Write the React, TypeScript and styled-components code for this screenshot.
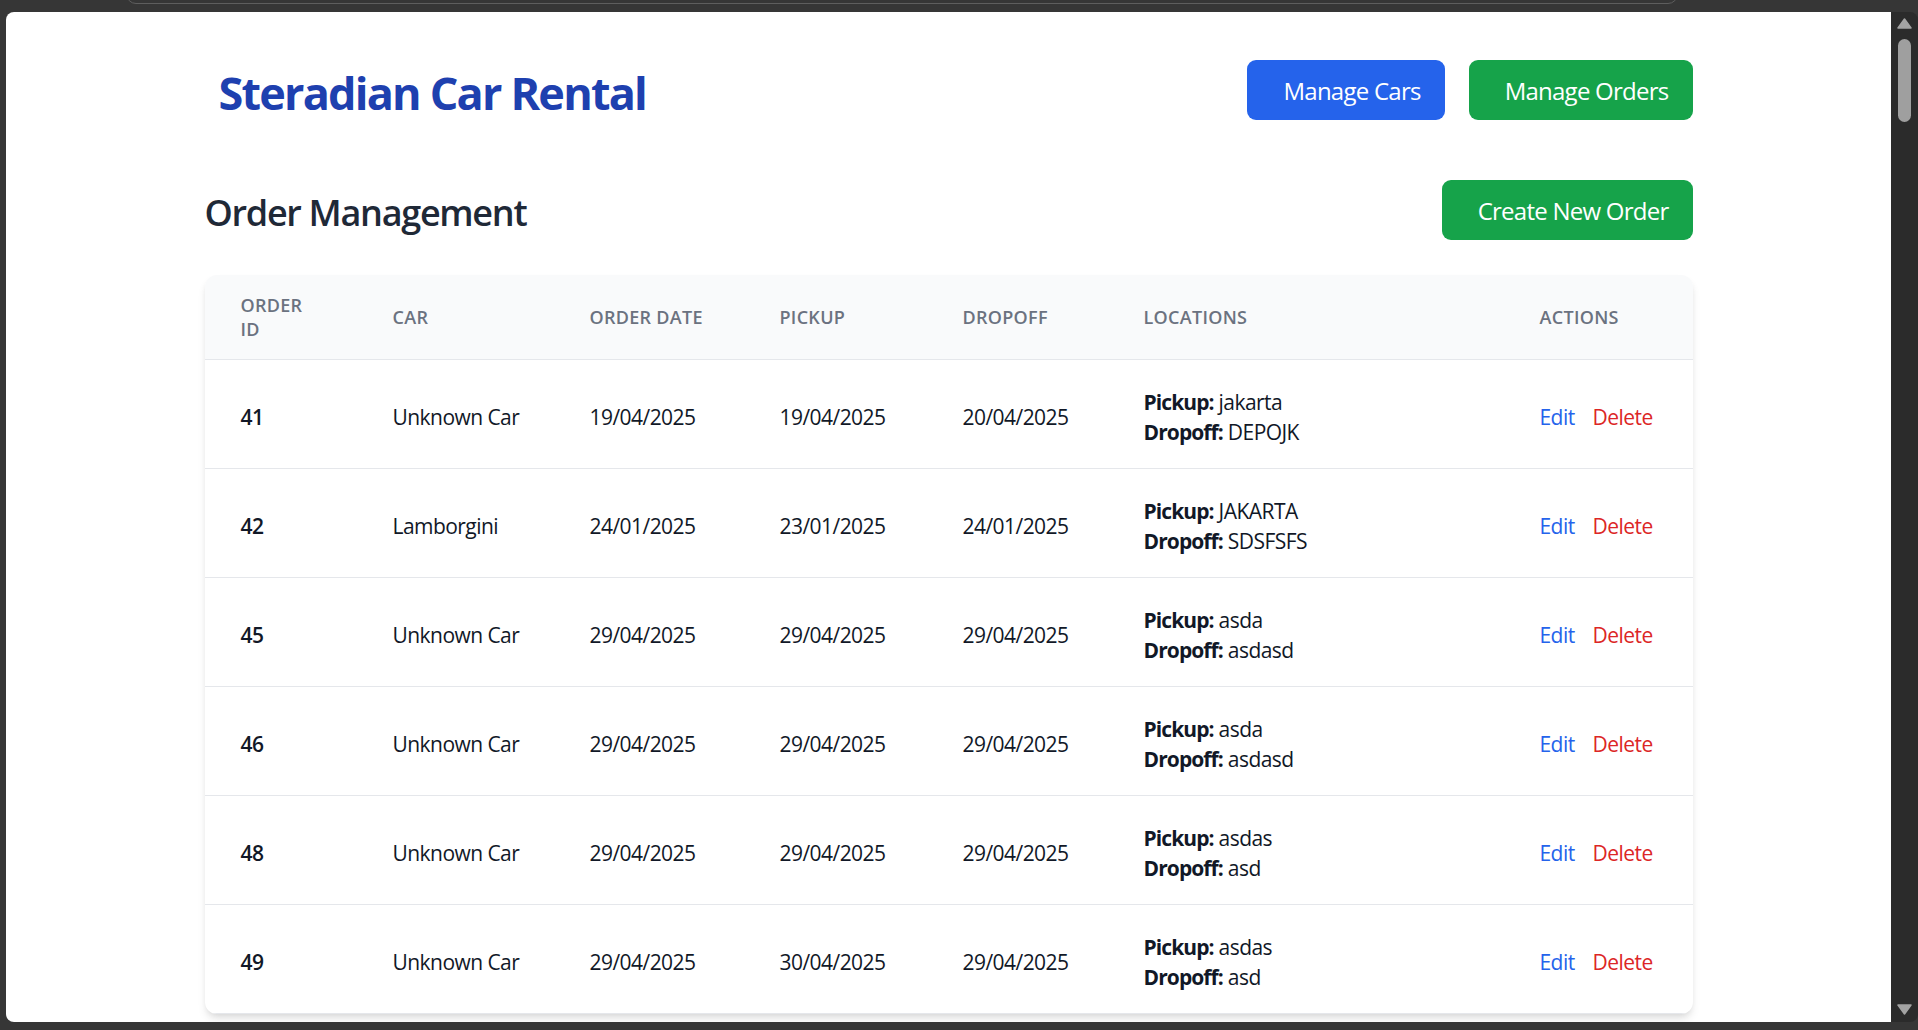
import React from "react";
import styled, { createGlobalStyle } from "styled-components";

const GlobalStyle = createGlobalStyle`
  html, body {
    margin: 0;
    padding: 0;
    background: #363636;
    overflow: hidden;
  }
  * { box-sizing: border-box; }
  body {
    font-family: "Open Sans", "Noto Sans", "Liberation Sans", sans-serif;
  }
`;

const Frame = styled.div`
  width: 1918px;
  height: 1030px;
  display: flex;
  flex-direction: column;
  background: #363636;
  overflow: hidden;
`;

const TopBar = styled.div`
  height: 12px;
  overflow: hidden;
  padding-left: 126px;
  flex-shrink: 0;
`;

const AddressOutline = styled.div`
  width: 1552px;
  height: 22px;
  margin-top: -18px;
  border: 1px solid #5e5e5e;
  border-radius: 10px;
`;

const Middle = styled.div`
  display: flex;
  height: 1010px;
  flex-shrink: 0;
`;

const LeftStrip = styled.div`
  width: 6px;
  flex-shrink: 0;
`;

const Page = styled.div`
  width: 1885px;
  height: 1010px;
  background: #ffffff;
  border-radius: 8px 0 0 8px;
  overflow: hidden;
  flex-shrink: 0;
`;

const ScrollTrack = styled.div`
  width: 27px;
  background: #2b2b2b;
  border-radius: 0 8px 8px 0;
  display: flex;
  flex-direction: column;
  align-items: center;
  padding: 6px 0 7px 0;
  flex-shrink: 0;
`;

const Thumb = styled.div`
  width: 13px;
  height: 83px;
  margin-top: 10px;
  border-radius: 7px;
  background: #9f9f9f;
`;

const TrackSpacer = styled.div`
  flex: 1;
`;

const Container = styled.div`
  max-width: 1536px;
  margin: 0 auto;
  padding: 0 24px;
`;

const Header = styled.header`
  display: flex;
  justify-content: space-between;
  align-items: center;
  padding: 48px 0 0 14px;
`;

const Brand = styled.h1`
  margin: 0;
  padding-top: 6px;
  font-size: 45px;
  line-height: 54px;
  font-weight: 700;
  color: #1e40af;
  letter-spacing: -1.8px;
`;

const Nav = styled.nav`
  display: flex;
  gap: 24px;
`;

const Button = styled.button<{ $tone: "blue" | "green" }>`
  height: 60px;
  padding: 2px 24px 0 36px;
  border: none;
  border-radius: 9px;
  font-family: inherit;
  font-size: 24px;
  line-height: 36px;
  font-weight: 400;
  letter-spacing: -0.75px;
  color: #ffffff;
  background: ${(p) => (p.$tone === "blue" ? "#2563eb" : "#16a34a")};
  cursor: pointer;
`;

const SectionBar = styled.div`
  display: flex;
  justify-content: space-between;
  align-items: center;
  margin-top: 60px;
`;

const SectionTitle = styled.h2`
  margin: 0;
  padding-top: 5px;
  font-size: 36px;
  line-height: 48px;
  font-weight: 600;
  color: #1f2937;
  letter-spacing: -1.3px;
`;

const TableCard = styled.div`
  margin-top: 35px;
  background: #ffffff;
  border-radius: 12px;
  overflow: hidden;
  box-shadow: 0 6px 9px -1.5px rgba(0, 0, 0, 0.1), 0 3px 6px -3px rgba(0, 0, 0, 0.1);
`;

const Table = styled.table`
  width: 100%;
  border-collapse: collapse;
  table-layout: fixed;
`;

const HeadRow = styled.tr`
  background: #f9fafb;
  border-bottom: 1px solid #e5e7eb;
`;

const Th = styled.th`
  padding: 18px 36px;
  text-align: left;
  font-size: 18px;
  line-height: 24px;
  font-weight: 600;
  letter-spacing: 0.3px;
  color: #6b7280;
  text-transform: uppercase;
  vertical-align: middle;
`;

const BodyRow = styled.tr`
  border-bottom: 1px solid #e5e7eb;
`;

const Td = styled.td<{ $strong?: boolean }>`
  padding: 27px 36px 21px;
  font-size: 21px;
  line-height: 30px;
  color: #111827;
  font-weight: ${(p) => (p.$strong ? 600 : 400)};
  white-space: nowrap;
  vertical-align: middle;
  letter-spacing: -0.55px;
`;

const LocLine = styled.div`
  white-space: nowrap;
`;

const Label = styled.span`
  font-weight: 700;
  letter-spacing: -0.9px;
`;

const ActionLink = styled.a<{ $tone: "blue" | "red" }>`
  color: ${(p) => (p.$tone === "blue" ? "#2563eb" : "#dc2626")};
  text-decoration: none;
  margin-right: ${(p) => (p.$tone === "blue" ? "18px" : "0")};
  cursor: pointer;
`;

const cols = [152, 197, 190, 183, 181, 396, 189];

type Order = {
  id: number;
  car: string;
  date: string;
  pickup: string;
  dropoff: string;
  from: string;
  to: string;
};

const orders: Order[] = [
  { id: 41, car: "Unknown Car", date: "19/04/2025", pickup: "19/04/2025", dropoff: "20/04/2025", from: "jakarta", to: "DEPOJK" },
  { id: 42, car: "Lamborgini", date: "24/01/2025", pickup: "23/01/2025", dropoff: "24/01/2025", from: "JAKARTA", to: "SDSFSFS" },
  { id: 45, car: "Unknown Car", date: "29/04/2025", pickup: "29/04/2025", dropoff: "29/04/2025", from: "asda", to: "asdasd" },
  { id: 46, car: "Unknown Car", date: "29/04/2025", pickup: "29/04/2025", dropoff: "29/04/2025", from: "asda", to: "asdasd" },
  { id: 48, car: "Unknown Car", date: "29/04/2025", pickup: "29/04/2025", dropoff: "29/04/2025", from: "asdas", to: "asd" },
  { id: 49, car: "Unknown Car", date: "29/04/2025", pickup: "30/04/2025", dropoff: "29/04/2025", from: "asdas", to: "asd" },
];

const UpArrow = () => (
  <svg width="15" height="11" viewBox="0 0 15 11">
    <path d="M7.5 1 L14 10 L1 10 Z" fill="#a3a3a3" stroke="#a3a3a3" strokeWidth="1.5" strokeLinejoin="round" />
  </svg>
);

const DownArrow = () => (
  <svg width="15" height="11" viewBox="0 0 15 11">
    <path d="M1 1 L14 1 L7.5 10 Z" fill="#a3a3a3" stroke="#a3a3a3" strokeWidth="1.5" strokeLinejoin="round" />
  </svg>
);

export default function App() {
  return (
    <>
      <GlobalStyle />
      <Frame>
        <TopBar>
          <AddressOutline />
        </TopBar>
        <Middle>
          <LeftStrip />
          <Page>
            <Container>
              <Header>
                <Brand>Steradian Car Rental</Brand>
                <Nav>
                  <Button $tone="blue">Manage Cars</Button>
                  <Button $tone="green">Manage Orders</Button>
                </Nav>
              </Header>
              <SectionBar>
                <SectionTitle>Order Management</SectionTitle>
                <Button $tone="green">Create New Order</Button>
              </SectionBar>
              <TableCard>
                <Table>
                  <colgroup>
                    {cols.map((w, i) => (
                      <col key={i} style={{ width: w }} />
                    ))}
                  </colgroup>
                  <thead>
                    <HeadRow>
                      <Th>Order ID</Th>
                      <Th>Car</Th>
                      <Th>Order Date</Th>
                      <Th>Pickup</Th>
                      <Th>Dropoff</Th>
                      <Th>Locations</Th>
                      <Th>Actions</Th>
                    </HeadRow>
                  </thead>
                  <tbody>
                    {orders.map((o) => (
                      <BodyRow key={o.id}>
                        <Td $strong>{o.id}</Td>
                        <Td>{o.car}</Td>
                        <Td>{o.date}</Td>
                        <Td>{o.pickup}</Td>
                        <Td>{o.dropoff}</Td>
                        <Td>
                          <LocLine>
                            <Label>Pickup:</Label> {o.from}
                          </LocLine>
                          <LocLine>
                            <Label>Dropoff:</Label> {o.to}
                          </LocLine>
                        </Td>
                        <Td>
                          <ActionLink $tone="blue">Edit</ActionLink>
                          <ActionLink $tone="red">Delete</ActionLink>
                        </Td>
                      </BodyRow>
                    ))}
                  </tbody>
                </Table>
              </TableCard>
            </Container>
          </Page>
          <ScrollTrack>
            <UpArrow />
            <Thumb />
            <TrackSpacer />
            <DownArrow />
          </ScrollTrack>
        </Middle>
      </Frame>
    </>
  );
}
